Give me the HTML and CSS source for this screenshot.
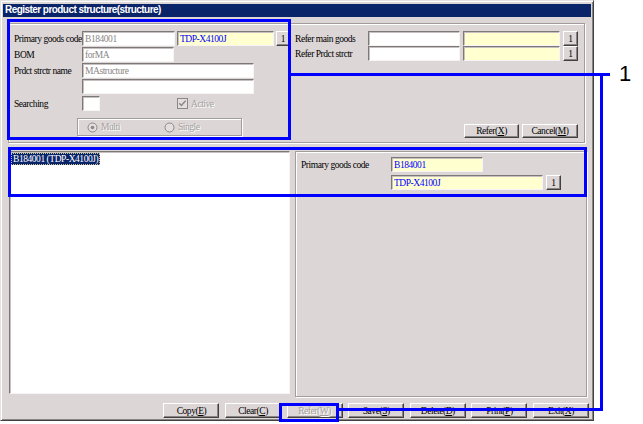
FILE: index.html
```html
<!DOCTYPE html>
<html lang="en">

<head>
    <meta charset="UTF-8">
    <meta name="viewport" content="width=device-width, initial-scale=1.0">
    <title>Register product structure</title>
    <link rel="stylesheet" href="styles.css">
</head>

<body>
    <div class="screen">
        <div class="window">
            <div class="titlebar">Register product structure(structure)</div>

            <div class="group top">
                <div class="col-left">
                    <div class="row">
                        <label class="lbl">Primary goods code</label>
                        <input class="fld w93 off" value="B184001" readonly>
                        <input class="fld w97 ref" value="TDP-X4100J" readonly>
                        <button class="btn pick">1</button>
                    </div>
                    <div class="row">
                        <label class="lbl">BOM</label>
                        <input class="fld w92 off" value="forMA" readonly>
                    </div>
                    <div class="row">
                        <label class="lbl">Prdct strctr name</label>
                        <input class="fld w172 off" value="MAstructure" readonly>
                    </div>
                    <div class="row">
                        <span class="lbl"></span>
                        <input class="fld w172" value="">
                    </div>
                    <div class="row searching">
                        <label class="lbl">Searching</label>
                        <input class="fld w18" value="">
                        <span class="check dim">
                            <svg width="11" height="11" viewBox="0 0 11 11">
                                <rect x="0.5" y="0.5" width="10" height="10" fill="#e4dfdf" stroke="#8d8888" />
                                <path d="M2.3 5.2l2.1 2.2L8.6 2.8" fill="none" stroke="#8d8888" stroke-width="1.5" />
                            </svg>
                            Active
                        </span>
                    </div>
                    <div class="radios">
                        <span class="opt dim">
                            <svg width="11" height="11" viewBox="0 0 11 11">
                                <circle cx="5.5" cy="5.5" r="4.5" fill="#e4dfdf" stroke="#8d8888" />
                                <circle cx="5.5" cy="5.5" r="1.8" fill="#8d8888" />
                            </svg>
                            Multi
                        </span>
                        <span class="opt dim">
                            <svg width="11" height="11" viewBox="0 0 11 11">
                                <circle cx="5.5" cy="5.5" r="4.5" fill="#e4dfdf" stroke="#8d8888" />
                            </svg>
                            Single
                        </span>
                    </div>
                </div>

                <div class="col-right">
                    <div class="row">
                        <label class="lbl">Refer main goods</label>
                        <input class="fld w92" value="">
                        <input class="fld w97 ref" value="">
                        <button class="btn pick">1</button>
                    </div>
                    <div class="row">
                        <label class="lbl">Refer Prdct strctr</label>
                        <input class="fld w92" value="">
                        <input class="fld w97 ref" value="">
                        <button class="btn pick">1</button>
                    </div>
                    <div class="actions">
                        <button class="btn act">Refer(<u>X</u>)</button>
                        <button class="btn act cancel">Cancel(<u>M</u>)</button>
                    </div>
                </div>
            </div>

            <div class="main">
                <div class="tree">
                    <span class="node">B184001 (TDP-X4100J)</span>
                </div>
                <div class="group detail">
                    <div class="row">
                        <label class="lbl">Primary goods code</label>
                        <input class="fld w92 ref" value="B184001" readonly>
                    </div>
                    <div class="row">
                        <span class="lbl"></span>
                        <input class="fld w152 ref" value="TDP-X4100J" readonly>
                        <button class="btn pick">1</button>
                    </div>
                </div>
            </div>

            <div class="footer">
                <button class="btn wide">Copy(<u>E</u>)</button>
                <button class="btn wide">Clear(<u>C</u>)</button>
                <button class="btn wide dim">Refer(<u>W</u>)</button>
                <button class="btn wide">Save(<u>S</u>)</button>
                <button class="btn wide">Delete(<u>D</u>)</button>
                <button class="btn wide">Print(<u>P</u>)</button>
                <button class="btn wide">Exit(<u>X</u>)</button>
            </div>
        </div>

        <!-- callout marks over the screenshot -->
        <div class="mark m1"></div>
        <div class="mark m2"></div>
        <div class="mark m3"></div>
        <div class="lead l1"></div>
        <div class="lead l2"></div>
        <div class="lead l3"></div>
        <div class="num">1</div>
    </div>
</body>

</html>
```

FILE: styles.css
```css
body {
    margin: 0;
    background: #fff;
    font-family: "Liberation Serif", "Times New Roman", serif;
    font-size: 9.5px;
    letter-spacing: -0.45px;
    color: #000;
}

.screen {
    position: relative;
    width: 643px;
    height: 424px;
    overflow: hidden;
}

.window {
    width: 594px;
    box-sizing: border-box;
    background: #dcd6d6;
    border: 1px solid;
    border-color: #e6e2e2 #404040 #404040 #e6e2e2;
    box-shadow: inset 1px 1px 0 #fff, inset -1px -1px 0 #8a8484;
    padding: 3px 2px 2px 2px;
}

.titlebar {
    height: 13px;
    line-height: 13px;
    background: #0a246a;
    color: #fff;
    font: bold 10px "Liberation Sans", Arial, sans-serif;
    letter-spacing: -0.55px;
    padding-left: 2px;
}

/* etched frame */
.group {
    box-sizing: border-box;
    border: 1px solid #a29c9c;
    box-shadow: inset 1px 1px 0 #fff, 1px 1px 0 #fff;
}

.top {
    margin: 6px 0 0 5px;
    width: 577px;
    height: 120px;
    padding: 7px 6px 6px 5px;
    display: flex;
    gap: 5px;
}

.col-left {
    width: 276px;
    display: flex;
    flex-direction: column;
    gap: 1px;
}

.col-right {
    width: 283px;
    display: flex;
    flex-direction: column;
}

.row {
    display: flex;
    align-items: center;
    height: 15px;
    gap: 2px;
}

.lbl {
    width: 66px;
    white-space: nowrap;
}

.col-right .row {
    gap: 3px;
}

.col-right .lbl {
    width: 70px;
}

.searching {
    margin-top: 1px;
}

.fld {
    box-sizing: border-box;
    height: 15px;
    margin: 0;
    padding: 0 2px;
    font: inherit;
    letter-spacing: inherit;
    color: #000;
    background: #fff;
    border: 1px solid;
    border-color: #7d7878 #f6f4f4 #f6f4f4 #7d7878;
    box-shadow: inset 1px 1px 0 #c6c0c0;
    outline: none;
}

.w18 { width: 18px; }
.w92 { width: 92px; }
.w93 { width: 93px; }
.w97 { width: 97px; }
.w152 { width: 152px; }
.w172 { width: 172px; }

.off {
    color: #8a8686;
}

.ref {
    background: #ffffd0;
    color: #0000ff;
}

.btn {
    box-sizing: border-box;
    height: 15px;
    margin: 0;
    padding: 0;
    font: inherit;
    letter-spacing: inherit;
    color: #000;
    background: #dcd6d6;
    border: 1px solid;
    border-color: #fff #404040 #404040 #fff;
    box-shadow: inset -1px -1px 0 #8a8484;
}

.btn u {
    text-decoration: underline;
}

.pick {
    width: 14px;
}

.col-right .pick,
.detail .pick {
    width: 15px;
}

.dim {
    color: #a59f9f;
    text-shadow: 1px 1px 0 #fff;
}

.check {
    display: flex;
    align-items: center;
    gap: 3px;
    margin-left: 75px;
}

.radios {
    margin: 6px 0 0 63px;
    width: 165px;
    height: 18px;
    box-sizing: border-box;
    border: 1px solid #a29c9c;
    box-shadow: inset 1px 1px 0 #fff, 1px 1px 0 #fff;
    display: flex;
    align-items: center;
    padding-left: 9px;
}

.opt {
    width: 80px;
    display: flex;
    align-items: center;
    gap: 3px;
}

.actions {
    margin-top: auto;
    margin-bottom: -2px;
    display: flex;
    justify-content: flex-end;
    gap: 3px;
}

.act {
    width: 55px;
    height: 14px;
}

.act.cancel {
    width: 56px;
}

.main {
    display: flex;
    align-items: flex-start;
    gap: 5px;
    margin: 8px 0 0 6px;
}

.tree {
    width: 281px;
    height: 243px;
    box-sizing: border-box;
    background: #fff;
    border: 1px solid;
    border-color: #7d7878 #f6f4f4 #f6f4f4 #7d7878;
    box-shadow: inset 1px 1px 0 #c6c0c0;
    padding: 1px;
}

.node {
    display: inline-block;
    background: #0a246a;
    color: #fff;
    border: 1px dotted #c8c890;
    line-height: 10px;
    padding: 0 1px;
}

.detail {
    width: 292px;
    height: 246px;
    padding: 5px;
}

.detail .row {
    gap: 3px;
}

.detail .row + .row {
    margin-top: 3px;
}

.detail .lbl {
    width: 87px;
}

.footer {
    display: flex;
    justify-content: flex-end;
    gap: 5.6px;
    margin-top: 6px;
    padding-right: 2px;
}

.wide {
    width: 56px;
}

/* callouts */
.mark {
    position: absolute;
    box-sizing: border-box;
    border: 3px solid #0000ff;
}

.m1 { left: 7px; top: 19px; width: 284px; height: 121px; }
.m2 { left: 8px; top: 147px; width: 579px; height: 50px; }
.m3 { left: 279px; top: 403px; width: 60px; height: 19px; }

.lead {
    position: absolute;
    background: #0000ff;
}

.l1 { left: 291px; top: 73px; width: 319px; height: 3px; }
.l2 { left: 600px; top: 73px; width: 3px; height: 338px; }
.l3 { left: 339px; top: 408px; width: 264px; height: 3px; }

.num {
    position: absolute;
    left: 619px;
    top: 63px;
    font: 22px/22px "Liberation Sans", Arial, sans-serif;
    letter-spacing: 0;
}
```
